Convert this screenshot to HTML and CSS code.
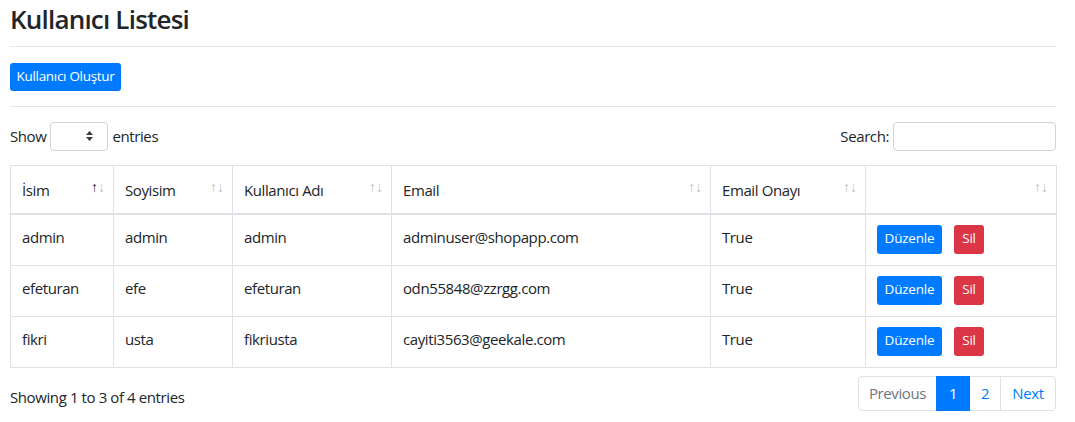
FILE: index.html
```html
<!DOCTYPE html>
<html lang="tr">
<head>
<meta charset="utf-8">
<title>Kullanıcı Listesi</title>
<link rel="stylesheet" href="styles.css">
</head>
<body>
<div class="page">
  <h1 class="title">Kullanıcı Listesi</h1>
  <hr class="rule">
  <div class="actions">
    <a class="btn btn-primary" href="#">Kullanıcı Oluştur</a>
  </div>
  <hr class="rule">
  <div class="dt-top">
    <label class="dt-length">Show
      <span class="select"><span class="caret"><svg width="7" height="10" viewBox="0 0 7 10"><path d="M3.5 0 L7 4 H0 Z M0 6 H7 L3.5 10 Z" fill="#343a40"/></svg></span></span>
      entries</label>
    <label class="dt-search">Search: <span class="input"></span></label>
  </div>
  <table class="grid">
    <colgroup>
      <col class="c1"><col class="c2"><col class="c3"><col class="c4"><col class="c5"><col class="c6">
    </colgroup>
    <thead>
      <tr>
        <th><span>İsim</span><span class="sort"><span class="up on">↑</span><span class="dn">↓</span></span></th>
        <th><span>Soyisim</span><span class="sort"><span class="up">↑</span><span class="dn">↓</span></span></th>
        <th><span>Kullanıcı Adı</span><span class="sort"><span class="up">↑</span><span class="dn">↓</span></span></th>
        <th><span>Email</span><span class="sort"><span class="up">↑</span><span class="dn">↓</span></span></th>
        <th><span>Email Onayı</span><span class="sort"><span class="up">↑</span><span class="dn">↓</span></span></th>
        <th><span></span><span class="sort"><span class="up">↑</span><span class="dn">↓</span></span></th>
      </tr>
    </thead>
    <tbody>
      <tr>
        <td>admin</td><td>admin</td><td>admin</td><td>adminuser@shopapp.com</td><td>True</td>
        <td class="opcell"><div class="ops"><a class="btn btn-primary" href="#">Düzenle</a><a class="btn btn-danger" href="#">Sil</a></div></td>
      </tr>
      <tr>
        <td>efeturan</td><td>efe</td><td>efeturan</td><td>odn55848@zzrgg.com</td><td>True</td>
        <td class="opcell"><div class="ops"><a class="btn btn-primary" href="#">Düzenle</a><a class="btn btn-danger" href="#">Sil</a></div></td>
      </tr>
      <tr>
        <td>fikri</td><td>usta</td><td>fikriusta</td><td>cayiti3563@geekale.com</td><td>True</td>
        <td class="opcell"><div class="ops"><a class="btn btn-primary" href="#">Düzenle</a><a class="btn btn-danger" href="#">Sil</a></div></td>
      </tr>
    </tbody>
  </table>
  <div class="dt-bottom">
    <div class="dt-info">Showing 1 to 3 of 4 entries</div>
    <ul class="pager">
      <li class="pg prev disabled">Previous</li>
      <li class="pg one active">1</li>
      <li class="pg two">2</li>
      <li class="pg next">Next</li>
    </ul>
  </div>
</div>
</body>
</html>
```
FILE: styles.css
```css
* { box-sizing: border-box; }
html, body { margin: 0; padding: 0; background: #fff; }
body {
  font-family: "Open Sans", "Noto Sans", "Liberation Sans", sans-serif;
  font-size: 15px;
  letter-spacing: -0.4px;
  color: #212529;
}
.page { width: 1046px; margin-left: 10px; }
.title {
  margin: 0;
  padding-top: 2px;
  font-size: 26px;
  font-weight: 600;
  letter-spacing: -0.8px;
  line-height: 34px;
  height: 46px;
}
.rule { border: 0; border-top: 1px solid rgba(0,0,0,.1); margin: 0; }
.actions { padding: 16px 0 15px; line-height: 0; }
.btn {
  display: inline-flex;
  align-items: center;
  justify-content: center;
  height: 29px;
  padding: 0;
  font-size: 13.5px;
  letter-spacing: -0.2px;
  line-height: 1;
  color: #fff;
  text-decoration: none;
  border-radius: 3px;
}
.actions .btn { height: 28px; width: 111px; letter-spacing: -0.3px; }
.btn-primary { background: #007bff; }
.btn-danger { background: #dc3545; }
.dt-top {
  display: flex;
  justify-content: space-between;
  align-items: center;
  margin-top: 15px;
  height: 28px;
}
.dt-length, .dt-search { display: flex; align-items: center; gap: 4px; }
.select {
  width: 58px; height: 29px;
  border: 1px solid #ced4da; border-radius: 4px;
  display: inline-flex; align-items: center; justify-content: flex-end;
  padding-right: 14px;
}
.caret { display: flex; }
.input { width: 163px; height: 29px; border: 1px solid #ced4da; border-radius: 4px; display: inline-block; }
.grid {
  margin-top: 15px;
  width: 1046px;
  border-collapse: collapse;
  table-layout: fixed;
  border: 1px solid #dee2e6;
}
.c1 { width: 103px; } .c2 { width: 119px; } .c3 { width: 159px; }
.c4 { width: 319px; } .c5 { width: 155px; } .c6 { width: 191px; }
.grid th, .grid td {
  border: 1px solid #dee2e6;
  padding: 10px 12px 10px 11px;
  text-align: left;
  vertical-align: middle;
}
.grid th {
  font-weight: 400;
  height: 48px;
  border-bottom-width: 2px;
  position: relative;
  padding-top: 11px;
}
.sort {
  position: absolute;
  right: 8px;
  top: 11px;
  font-size: 14px;
  letter-spacing: 0;
  color: #212529;
}
.sort span { opacity: .3; }
.sort .on { opacity: 1; }
.grid td { padding-top: 8px; padding-bottom: 13px; }
.grid td.opcell { padding-top: 10px; padding-bottom: 11px; }
.ops { display: flex; gap: 12px; }
.ops .btn-primary { width: 65px; }
.ops .btn-danger { width: 30px; }
.dt-bottom {
  display: flex;
  justify-content: space-between;
  align-items: flex-start;
  margin-top: 8px;
}
.dt-info { padding-top: 11px; }
.pager { list-style: none; margin: 0; padding: 0; display: flex; }
.pg {
  height: 35px;
  display: flex; align-items: center; justify-content: center;
  border: 1px solid #dee2e6;
  margin-left: -1px;
  color: #007bff;
}
.prev { border-radius: 4px 0 0 4px; margin-left: 0; width: 79px; }
.one { width: 34px; }
.two { width: 32px; }
.next { border-radius: 0 4px 4px 0; width: 56px; }
.pg.disabled { color: #6c757d; }
.pg.active { background: #007bff; border-color: #007bff; color: #fff; position: relative; }
```
